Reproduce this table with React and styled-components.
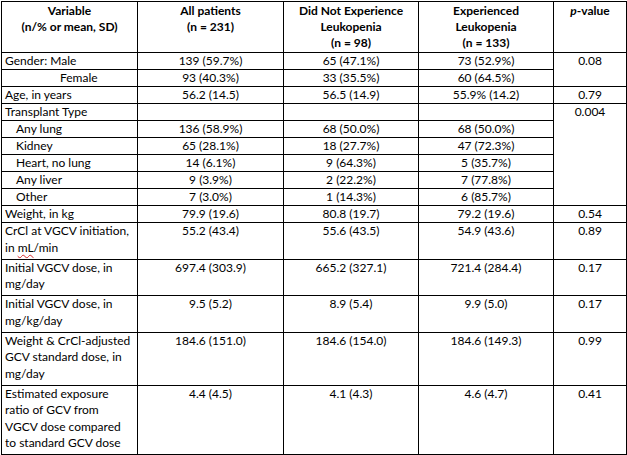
import React from "react";
import styled, { createGlobalStyle } from "styled-components";

const GlobalStyle = createGlobalStyle`
  html, body {
    margin: 0;
    padding: 0;
    background: #ffffff;
  }
  body {
    font-family: Lato, "Open Sans", sans-serif;
    color: #000000;
  }
`;

const Page = styled.div`
  padding: 1px 0 0 1px;
`;

const Table = styled.table`
  border-collapse: collapse;
  table-layout: fixed;
  width: 625px;
  font-size: 12px;
`;

const HeadCell = styled.th`
  border: 1px solid #000;
  padding: 1px 4px 1px;
  line-height: 16px;
  font-weight: 700;
  text-align: center;
  vertical-align: top;
  white-space: nowrap;
`;

const Cell = styled.td`
  border: 1px solid #000;
  padding: 0 4px ${(p) => (p.$multi ? "2.5px" : "0")}
    ${(p) => (p.$label ? `${3 + (p.$indent || 0)}px` : "4px")};
  line-height: ${(p) => (p.$multi ? "16.5px" : "16px")};
  text-align: ${(p) => (p.$label ? "left" : "center")};
  vertical-align: top;
  white-space: nowrap;
`;

const Squiggle = styled.span`
  text-decoration: underline wavy #d42a2a;
  text-decoration-thickness: 1px;
  text-underline-offset: 2px;
`;

const Italic = styled.i`
  font-style: italic;
`;

const rows = [
  { label: ["Gender: Male"], all: "139 (59.7%)", no: "65 (47.1%)", yes: "73 (52.9%)", p: "0.08", span: 2 },
  { label: ["Female"], indent: 55, all: "93 (40.3%)", no: "33 (35.5%)", yes: "60 (64.5%)" },
  { label: ["Age, in years"], all: "56.2 (14.5)", no: "56.5 (14.9)", yes: "55.9% (14.2)", p: "0.79" },
  { label: ["Transplant Type"], all: "", no: "", yes: "", p: "0.004", span: 6 },
  { label: ["Any lung"], indent: 11, all: "136 (58.9%)", no: "68 (50.0%)", yes: "68 (50.0%)" },
  { label: ["Kidney"], indent: 11, all: "65 (28.1%)", no: "18 (27.7%)", yes: "47 (72.3%)" },
  { label: ["Heart, no lung"], indent: 11, all: "14 (6.1%)", no: "9 (64.3%)", yes: "5 (35.7%)" },
  { label: ["Any liver"], indent: 11, all: "9 (3.9%)", no: "2 (22.2%)", yes: "7 (77.8%)" },
  { label: ["Other"], indent: 11, all: "7 (3.0%)", no: "1 (14.3%)", yes: "6 (85.7%)" },
  { label: ["Weight, in kg"], all: "79.9 (19.6)", no: "80.8 (19.7)", yes: "79.2 (19.6)", p: "0.54" },
  {
    label: [
      "CrCl at VGCV initiation,",
      <>
        in <Squiggle>mL</Squiggle>/min
      </>,
    ],
    all: "55.2 (43.4)",
    no: "55.6 (43.5)",
    yes: "54.9 (43.6)",
    p: "0.89",
  },
  { label: ["Initial VGCV dose, in", "mg/day"], all: "697.4 (303.9)", no: "665.2 (327.1)", yes: "721.4 (284.4)", p: "0.17" },
  { label: ["Initial VGCV dose, in", "mg/kg/day"], all: "9.5 (5.2)", no: "8.9 (5.4)", yes: "9.9 (5.0)", p: "0.17" },
  {
    label: ["Weight & CrCl-adjusted", "GCV standard dose, in", "mg/day"],
    all: "184.6 (151.0)",
    no: "184.6 (154.0)",
    yes: "184.6 (149.3)",
    p: "0.99",
  },
  {
    label: ["Estimated exposure", "ratio of GCV from", "VGCV dose compared", "to standard GCV dose"],
    all: "4.4 (4.5)",
    no: "4.1 (4.3)",
    yes: "4.6 (4.7)",
    p: "0.41",
  },
];

function Lines({ items }) {
  return items.map((line, i) => (
    <React.Fragment key={i}>
      {i > 0 && <br />}
      {line}
    </React.Fragment>
  ));
}

export default function App() {
  return (
    <Page>
      <GlobalStyle />
      <Table>
        <colgroup>
          <col style={{ width: 136 }} />
          <col style={{ width: 146 }} />
          <col style={{ width: 135 }} />
          <col style={{ width: 135 }} />
          <col style={{ width: 73 }} />
        </colgroup>
        <thead>
          <tr>
            <HeadCell>
              <Lines items={["Variable", "(n/% or mean, SD)"]} />
            </HeadCell>
            <HeadCell>
              <Lines items={["All patients", "(n = 231)"]} />
            </HeadCell>
            <HeadCell>
              <Lines items={["Did Not Experience", "Leukopenia", "(n = 98)"]} />
            </HeadCell>
            <HeadCell>
              <Lines items={["Experienced", "Leukopenia", "(n = 133)"]} />
            </HeadCell>
            <HeadCell>
              <Italic>p</Italic>-value
            </HeadCell>
          </tr>
        </thead>
        <tbody>
          {rows.map((r, i) => {
            const multi = r.label.length > 1;
            return (
              <tr key={i}>
                <Cell $label $indent={r.indent} $multi={multi}>
                  <Lines items={r.label} />
                </Cell>
                <Cell $multi={multi}>{r.all}</Cell>
                <Cell $multi={multi}>{r.no}</Cell>
                <Cell $multi={multi}>{r.yes}</Cell>
                {r.p !== undefined && (
                  <Cell $multi={multi} rowSpan={r.span || 1}>
                    {r.p}
                  </Cell>
                )}
              </tr>
            );
          })}
        </tbody>
      </Table>
    </Page>
  );
}
